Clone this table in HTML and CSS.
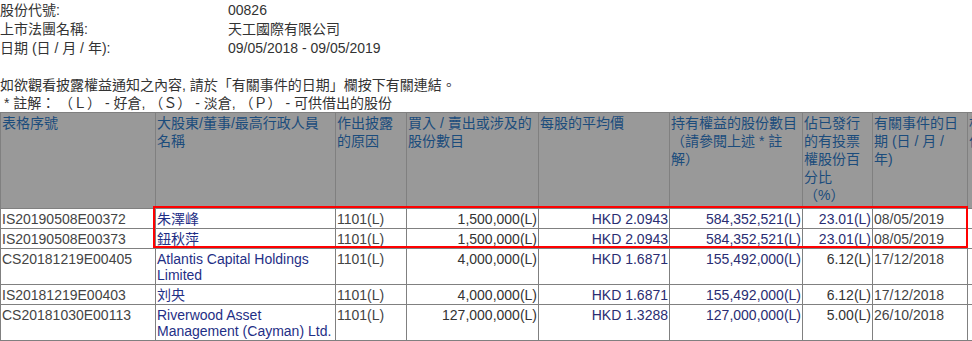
FILE: index.html
```html
<!DOCTYPE html>
<html lang="zh-HK">
<head>
    <meta charset="UTF-8">
    <title>權益披露</title>
    <link rel="stylesheet" href="styles.css">
</head>
<body>
    <div class="info">
        <span>股份代號:</span><span>00826</span>
        <span>上市法團名稱:</span><span>天工國際有限公司</span>
        <span>日期 (日 / 月 / 年):</span><span>09/05/2018 - 09/05/2019</span>
    </div>

    <div class="notes">
        <p>如欲觀看披露權益通知之內容, 請於「有關事件的日期」欄按下有關連結。</p>
        <p>&nbsp;* 註解： （Ｌ） - 好倉, （Ｓ） - 淡倉, （Ｐ） - 可供借出的股份</p>
    </div>

    <div class="table-wrap">
        <table>
            <colgroup>
                <col style="width:155px">
                <col style="width:180px">
                <col style="width:71px">
                <col style="width:132px">
                <col style="width:131px">
                <col style="width:133px">
                <col style="width:70px">
                <col style="width:95px">
                <col style="width:60px">
            </colgroup>
            <thead>
                <tr>
                    <th>表格序號</th>
                    <th>大股東/董事/最高行政人員<br>名稱</th>
                    <th>作出披露的原因</th>
                    <th>買入 / 賣出或涉及的股份數目</th>
                    <th>每股的平均價</th>
                    <th>持有權益的股份數目（請參閱上述 * 註解）</th>
                    <th>佔已發行的有投票權股份百分比<br>（%）</th>
                    <th>有關事件的日期 (日 / 月 / 年)</th>
                    <th>相聯法團<br>作出披露</th>
                </tr>
            </thead>
            <tbody>
                <tr>
                    <td class="id">IS20190508E00372</td>
                    <td class="name">朱澤峰</td>
                    <td>1101(L)</td>
                    <td class="num">1,500,000(L)</td>
                    <td class="num price">HKD 2.0943</td>
                    <td class="num price">584,352,521(L)</td>
                    <td class="num price">23.01(L)</td>
                    <td>08/05/2019</td>
                    <td></td>
                </tr>
                <tr>
                    <td class="id">IS20190508E00373</td>
                    <td class="name">鈕秋萍</td>
                    <td>1101(L)</td>
                    <td class="num">1,500,000(L)</td>
                    <td class="num price">HKD 2.0943</td>
                    <td class="num price">584,352,521(L)</td>
                    <td class="num price">23.01(L)</td>
                    <td>08/05/2019</td>
                    <td></td>
                </tr>
                <tr>
                    <td class="id">CS20181219E00405</td>
                    <td class="name">Atlantis Capital Holdings Limited</td>
                    <td>1101(L)</td>
                    <td class="num">4,000,000(L)</td>
                    <td class="num price">HKD 1.6871</td>
                    <td class="num price">155,492,000(L)</td>
                    <td class="num">6.12(L)</td>
                    <td>17/12/2018</td>
                    <td></td>
                </tr>
                <tr>
                    <td class="id">IS20181219E00403</td>
                    <td class="name">刘央</td>
                    <td>1101(L)</td>
                    <td class="num">4,000,000(L)</td>
                    <td class="num price">HKD 1.6871</td>
                    <td class="num price">155,492,000(L)</td>
                    <td class="num">6.12(L)</td>
                    <td>17/12/2018</td>
                    <td></td>
                </tr>
                <tr>
                    <td class="id">CS20181030E00113</td>
                    <td class="name">Riverwood Asset Management (Cayman) Ltd.</td>
                    <td>1101(L)</td>
                    <td class="num">127,000,000(L)</td>
                    <td class="num price">HKD 1.3288</td>
                    <td class="num price">127,000,000(L)</td>
                    <td class="num">5.00(L)</td>
                    <td>26/10/2018</td>
                    <td></td>
                </tr>
            </tbody>
        </table>
        <div class="highlight"></div>
    </div>
</body>
</html>
```

FILE: styles.css
```css
body {
    margin: 0;
    font-family: "Liberation Sans", Arial, "Noto Sans CJK TC", sans-serif;
    font-size: 14px;
    color: #333;
    background-color: #fff;
    overflow: hidden;
}
.info {
    display: grid;
    grid-template-columns: 228px auto;
    line-height: 19px;
    padding-top: 1px;
}
.notes {
    margin-top: 18px;
    line-height: 18px;
}
.notes p {
    margin: 0;
}
.table-wrap {
    position: relative;
    width: 1027px;
}
table {
    width: 1027px;
    table-layout: fixed;
    border-collapse: collapse;
}
th, td {
    border: 1px solid #808080;
    padding: 0 1px;
    text-align: left;
    vertical-align: top;
}
th {
    background-color: #999;
    color: #1b4c7c;
    font-weight: normal;
    line-height: 18px;
    height: 94px;
    padding-top: 1px;
    word-break: break-all;
}
td {
    line-height: 16px;
    padding-top: 2px;
    padding-bottom: 1px;
    color: #444;
}
td.name {
    color: #1f2f86;
}
td.num {
    text-align: right;
    color: #333;
}
td.price {
    color: #2a2d72;
}
.highlight {
    position: absolute;
    left: 153px;
    top: 94px;
    width: 811px;
    height: 38px;
    border: 2px solid #f00;
}
```
